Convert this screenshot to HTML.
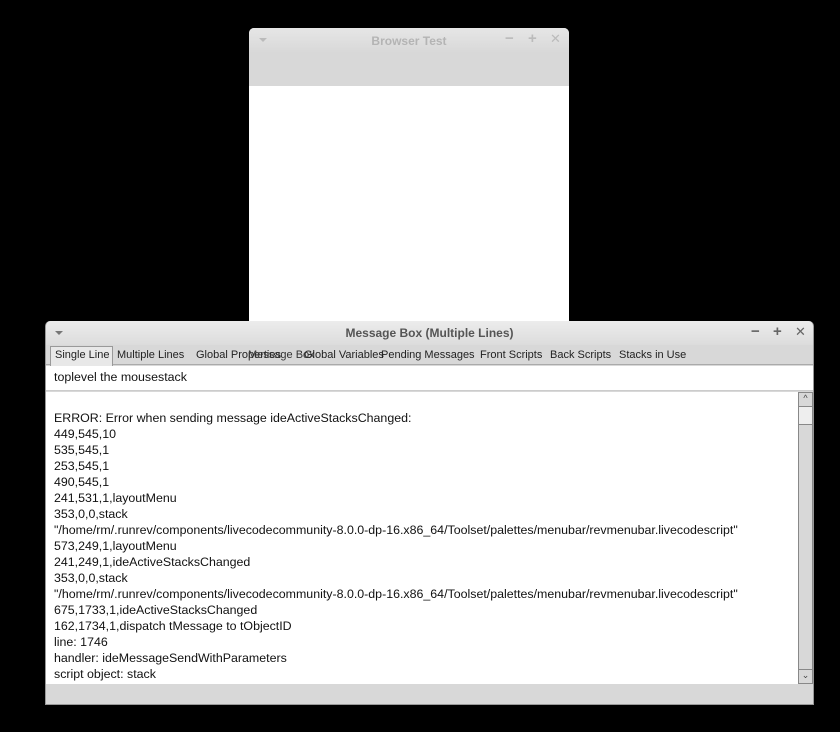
<!DOCTYPE html>
<html><head><style>
*{margin:0;padding:0;box-sizing:border-box}
body{width:840px;height:732px;background:#000;position:relative;overflow:hidden;font-family:"Liberation Sans","DejaVu Sans",sans-serif}
.abs{position:absolute}
.bt{left:249px;top:28px;width:320px;height:294px;background:#fff;border-radius:5px 5px 0 0;overflow:hidden}
.bt .tb{position:absolute;left:0;top:0;width:320px;height:58px;background:linear-gradient(#e6e6e6,#d8d8d8 25px,#d8d8d8)}
.mb{left:45px;top:321px;width:769px;height:384px;background:#d8d8d8;border-radius:5px 5px 0 0;border:1px solid #999;border-top:none}
.title{position:absolute;top:0;left:0;right:0;height:24px;background:linear-gradient(#ececec,#dcdcdc);border-radius:5px 5px 0 0}
.tabs{position:absolute;top:24px;left:0;right:0;height:20px;font-size:11px;color:#222;border-bottom:1px solid #aaa}
.tabs span{position:absolute;top:4px;white-space:nowrap}
.input{position:absolute;left:0;right:0;top:45px;height:25px;background:#fff;border-bottom:1px solid #ccc;font-size:12.4px;padding:4px 8px;color:#111}
.txt{position:absolute;left:0;top:71px;width:752px;height:292px;background:#fff;font-size:12.4px;line-height:16px;color:#111;padding:18px 8px;white-space:pre}
.sb{position:absolute;left:752px;top:71px;width:15px;height:292px;background:#d8d8d8;border:1px solid #888}
.btn{position:absolute;font-size:15px;font-weight:bold}
</style></head><body>
<div class="abs bt"><div class="tb">
<div class="abs" style="left:10px;top:10px;width:0;height:0;border-left:4px solid transparent;border-right:4px solid transparent;border-top:4px solid #bbb"></div>
<div class="abs" style="left:0;right:0;top:6px;text-align:center;font-size:12px;font-weight:bold;color:#b4b4b4">Browser Test</div>
<div class="btn" style="left:256px;top:2px;color:#bbb">−</div>
<div class="btn" style="left:279px;top:2px;color:#bbb">+</div>
<div class="btn" style="left:301px;top:3px;color:#bbb;font-size:13px">✕</div>
</div></div>
<div class="abs mb">
<div class="title">
<div class="abs" style="left:9px;top:10px;width:0;height:0;border-left:4px solid transparent;border-right:4px solid transparent;border-top:4px solid #777"></div>
<div class="abs" style="left:0;right:0;top:5px;text-align:center;font-size:12px;font-weight:bold;color:#555">Message Box (Multiple Lines)</div>
<div class="btn" style="left:705px;top:2px;color:#666">−</div>
<div class="btn" style="left:727px;top:2px;color:#666">+</div>
<div class="btn" style="left:749px;top:3px;color:#666;font-size:13px">✕</div>
</div>
<div class="tabs">
<div class="abs" style="left:4px;top:1px;width:63px;height:20px;background:#e8e8e8;border:1px solid #999;border-bottom:none"></div>
<span style="left:9px">Single Line</span><span style="left:71px">Multiple Lines</span><span style="left:150px">Global Properties</span><span style="left:202px;color:#333">Message Box</span><span style="left:258px">Global Variables</span><span style="left:335px">Pending Messages</span><span style="left:434px">Front Scripts</span><span style="left:504px">Back Scripts</span><span style="left:573px">Stacks in Use</span>
</div>
<div class="input">toplevel the mousestack</div>
<div class="txt">ERROR: Error when sending message ideActiveStacksChanged:
449,545,10
535,545,1
253,545,1
490,545,1
241,531,1,layoutMenu
353,0,0,stack
"/home/rm/.runrev/components/livecodecommunity-8.0.0-dp-16.x86_64/Toolset/palettes/menubar/revmenubar.livecodescript"
573,249,1,layoutMenu
241,249,1,ideActiveStacksChanged
353,0,0,stack
"/home/rm/.runrev/components/livecodecommunity-8.0.0-dp-16.x86_64/Toolset/palettes/menubar/revmenubar.livecodescript"
675,1733,1,ideActiveStacksChanged
162,1734,1,dispatch tMessage to tObjectID
line: 1746
handler: ideMessageSendWithParameters
script object: stack</div>
<div class="sb">
<div class="abs" style="left:0;top:0;width:13px;height:14px;border-bottom:1px solid #888;font-size:9px;text-align:center;color:#444">^</div>
<div class="abs" style="left:0;top:14px;width:13px;height:18px;border-bottom:1px solid #888;background:#eee"></div>
<div class="abs" style="left:0;top:276px;width:13px;height:14px;border-top:1px solid #888;font-size:9px;text-align:center;color:#444">⌄</div>
</div>
</div>
</body></html>
